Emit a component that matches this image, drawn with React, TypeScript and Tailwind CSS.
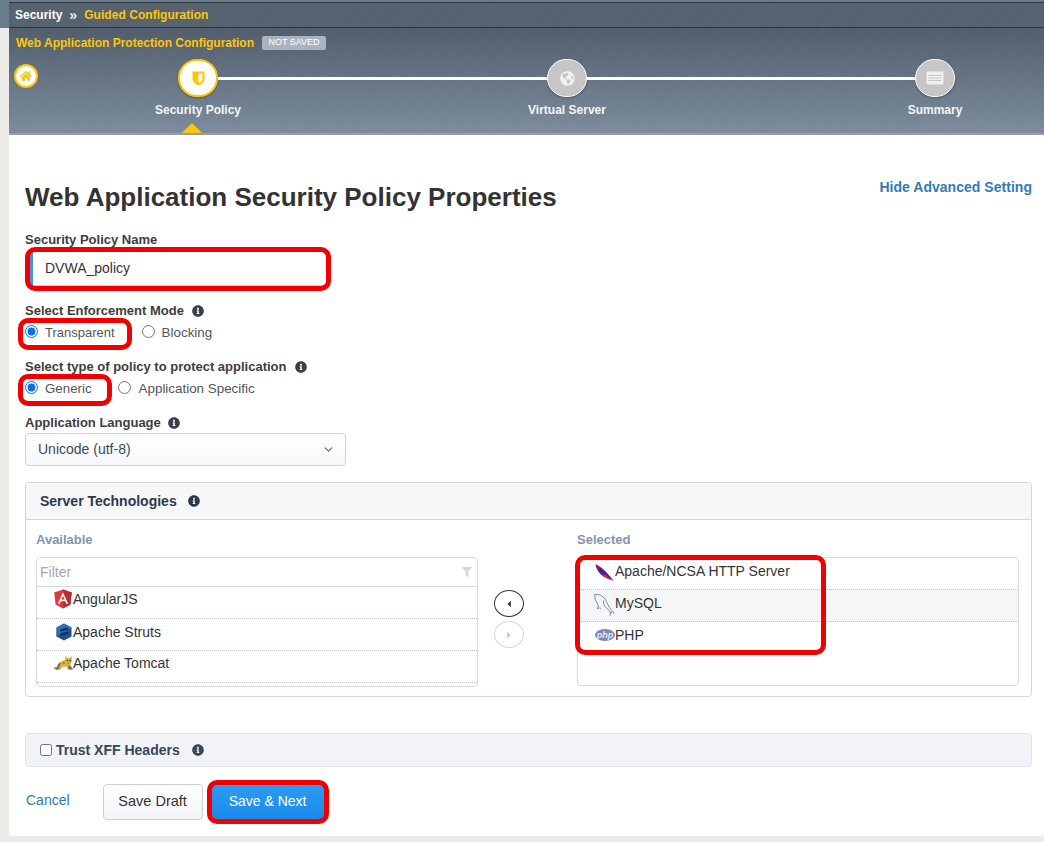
import { ChevronDown } from "lucide-react";
import { FaCaretLeft, FaCaretRight, FaFilter, FaGlobeAmericas, FaHome, FaInfoCircle } from "react-icons/fa";

const Info = () => <FaInfoCircle className="text-[12px] text-[#3a3f47]" />;

const AngularLogo = () => (
  <svg width="20" height="20" viewBox="0 0 20 20" className="shrink-0 -my-[1px]">
    <path d="M10 0.5 L18.8 3.6 L17.4 15.4 L10 19.5 L2.6 15.4 L1.2 3.6 Z" fill="#dd3a3a" />
    <path d="M10 0.5 L18.8 3.6 L17.4 15.4 L10 19.5 Z" fill="#b52e31" />
    <path d="M10 3.2 L15.2 14.8 H13.2 L12.2 12.2 H7.8 L6.8 14.8 H4.8 Z M10 7 L8.5 10.6 H11.5 Z" fill="#f2f2f2" fillRule="evenodd" />
  </svg>
);

const StrutsLogo = () => (
  <svg width="18" height="18" viewBox="0 0 18 18" className="shrink-0">
    <path d="M9 0.5 L16.5 4.6 V13.4 L9 17.5 L1.5 13.4 V4.6 Z" fill="#23508f" />
    <path d="M9 0.5 L16.5 4.6 L1.5 13.4 V4.6 Z" fill="#2f6fb8" />
    <path d="M5 6.5 L12.5 4.6 L13 6.4 L5.5 8.4 Z M5 10.8 L13 8.8 L13.4 10.6 L5.4 12.8 Z" fill="#10284f" />
  </svg>
);

const TomcatLogo = () => (
  <svg width="20" height="16" viewBox="0 0 20 16" className="shrink-0">
    <path d="M0.5 13 L4 12 L6 7.5 L10 5.5 L12 5 L12.5 1 L14.5 3 L16.5 3 L18.5 1 L19 6 L17.5 8.8 L17.5 11 L20 14.5 L15.5 14.5 L13.5 11.5 L9.5 12 L7 15 L3.5 14.8 Z" fill="#dcb53c" />
    <path d="M0.5 13 L4 12 L5.6 8.5 L8 8 L6.6 12 L5 14.6 L3.5 14.8 Z M15.5 14.5 L14.6 11.8 L17.3 10.6 L20 14.5 Z" fill="#77745c" />
    <path d="M8.5 7.5 L12.5 7 L11 9.5 Z" fill="#a8872a" />
    <circle cx="14.3" cy="5.6" r="0.8" fill="#3f3a22" />
    <circle cx="17" cy="5.6" r="0.8" fill="#3f3a22" />
    <path d="M15 7.8 H16.4 L15.7 8.8 Z" fill="#6b4a1e" />
  </svg>
);

const FeatherLogo = () => (
  <svg width="20" height="18" viewBox="0 0 20 18" className="shrink-0 mt-[4px]">
    <path d="M0.5 0.5 C4 1.5 9 5.5 12 9 C14 11.3 16 13.6 18.8 16.6 C14.5 15.4 9 13.4 5.6 10.2 C2.8 7.4 1 3.6 0.5 0.5 Z" fill="#4a1f8f" />
    <path d="M0.5 0.5 C2.5 1.2 4 2.4 5.4 3.8 L3 5.4 C1.8 3.8 1 2.2 0.5 0.5 Z" fill="#a3195b" />
    <path d="M9 10 C12 12 15 14.4 18.8 16.6 C15.4 15.8 11.4 14.4 8.2 12.2 Z" fill="#c92f6c" />
    <path d="M15.4 13.4 L19 17 L17.5 16.4 Z" fill="#e6a221" />
  </svg>
);

const DolphinLogo = () => (
  <svg width="21" height="23" viewBox="0 0 21 23" className="shrink-0 -my-[1px] mt-[2px]" fill="none" stroke="#5f8a99" strokeWidth="0.9" strokeLinecap="round" strokeLinejoin="round">
    <path d="M1 1.5 C5 1 8.5 2.5 11 6 C13 9 14.2 13.5 17.5 17 C18.5 18.2 19.6 19.2 20 20.5" />
    <path d="M1 1.5 C0.4 4.5 1.2 7.5 3.2 10 C4.4 11.8 4.2 14 3.6 15.5" />
    <path d="M3.6 15.5 C4.8 14.6 6 14.8 7 15.8 M9.4 8 C9.2 11 10.6 14 13.6 16 C15 17 16 18.4 16.4 20 M16.4 20 L18.2 18.8 M16.4 20 L16 22.4" />
  </svg>
);

const PhpLogo = () => (
  <span className="w-[20px] h-[12px] rounded-[50%] bg-[#7a86b8] shrink-0 flex items-center justify-center font-['Liberation_Sans',sans-serif] font-bold italic text-[9px] leading-none text-[#e6e9f5]">
    php
  </span>
);

const Row = ({ logo, name, shade, last, pl, pt = "pt-[2px]" }: { logo: React.ReactNode; name: string; shade?: boolean; last?: boolean; pl: string; pt?: string }) => (
  <div className={`h-[32px] flex items-start ${pt} ${pl} ${shade ? "bg-[#f5f6f8]" : ""} ${last ? "" : "border-b border-dotted border-[#b9bdc9]"}`}>
    <span className="flex items-center h-[20px] text-[14px] leading-[20px] text-[#333]">
      {logo}
      {name}
    </span>
  </div>
);

const Mark = ({ className }: { className: string }) => (
  <div className={`absolute border-[5px] border-[#f00000] rounded-[10px] pointer-events-none ${className}`} />
);

export default function App() {
  return (
    <div className="relative w-[1044px] h-[842px] overflow-hidden bg-[#ecebe7] font-['Liberation_Sans',Arial,sans-serif]">
      {/* page-top strip behind the title bar */}
      <div className="h-[28px] w-[1044px] bg-[#6b7b8e] -mb-[28px]" />
      <div className="relative ml-[9px] w-[1035px]">
        {/* breadcrumb */}
        <div className="pt-[2px]">
          <div className="h-[26px] flex items-center pl-[6px] border-t border-b border-[#2f353c] bg-[#55616e] bg-[repeating-linear-gradient(135deg,rgba(255,255,255,0.03)_0px,rgba(255,255,255,0.03)_1px,transparent_1px,transparent_3px)] text-[12px] font-bold leading-none">
            <span className="text-white">Security</span>
            <span className="text-[#e8e8e8] text-[14px] ml-[7px] mr-[7px]">»</span>
            <span className="text-[#fdc60b] tracking-[0.05px]">Guided Configuration</span>
          </div>
        </div>
        {/* wizard header */}
        <div className="relative h-[107px] bg-[repeating-linear-gradient(135deg,rgba(255,255,255,0.035)_0px,rgba(255,255,255,0.035)_1px,transparent_1px,transparent_3px),linear-gradient(#505c69,#7b8b9d)] border-b-[2px] border-[#9a9d9f]">
          <div className="flex items-center pl-[7px] pt-[7px] h-[23px]">
            <span className="text-[12px] font-bold text-[#fdc60b]">Web Application Protection Configuration</span>
            <span className="ml-[8px] h-[14px] w-[64px] rounded-[2px] bg-[#aab3c0] text-[9px] text-white flex items-center justify-center">NOT SAVED</span>
          </div>
          <div className="flex items-center pl-[5px] mt-[8px]">
            <span className="w-[24px] h-[24px] -mt-[5px] rounded-full bg-white border-[2px] border-[#fdc60b] flex items-center justify-center">
              <FaHome className="text-[12px] text-[#fdc60b]" />
            </span>
            <span className="ml-[140px] w-[40px] h-[38px] rounded-full bg-white border-[2px] border-[#fdc60b] flex items-center justify-center shadow-[0_1px_2px_rgba(0,0,0,0.3)]">
              <svg width="13" height="15" viewBox="0 0 13 15">
                <path d="M0.5 0.5 H12.5 V7.5 C12.5 11 9.5 13.3 6.5 14.5 C3.5 13.3 0.5 11 0.5 7.5 Z" fill="#fdc60b" />
                <path d="M6.5 2.5 H10.5 V7.5 C10.5 9.6 8.6 11 6.5 12 Z" fill="#ffffff" />
              </svg>
            </span>
            <span className="w-[329px] h-[3px] bg-white" />
            <span className="w-[40px] h-[38px] rounded-full bg-[#c6c6c6] border border-white flex items-center justify-center shadow-[0_1px_2px_rgba(0,0,0,0.3)]">
              <FaGlobeAmericas className="text-[15px] text-[#f2f2f2]" />
            </span>
            <span className="w-[328px] h-[3px] bg-white" />
            <span className="w-[40px] h-[38px] rounded-full bg-[#c6c6c6] border border-white flex items-center justify-center shadow-[0_1px_2px_rgba(0,0,0,0.3)]">
              <svg width="18" height="14" viewBox="0 0 18 14">
                <rect x="0.5" y="0.5" width="17" height="13" rx="1" fill="#f0f0f0" />
                <path d="M2.5 4.5 H15.5 M2.5 7 H15.5 M2.5 9.5 H15.5" stroke="#c6c6c6" strokeWidth="1" />
              </svg>
            </span>
          </div>
          <div className="flex mt-[4px] text-[12px] font-bold leading-[18px] text-[#f4f5f6]">
            <span className="ml-[129px] w-[120px] text-center">Security Policy</span>
            <span className="ml-[249px] w-[120px] text-center">Virtual Server</span>
            <span className="ml-[248px] w-[120px] text-center">Summary</span>
          </div>
          <div className="absolute left-[173px] bottom-0 w-0 h-0 border-l-[10px] border-r-[10px] border-b-[10px] border-l-transparent border-r-transparent border-b-[#fdc60b]" />
        </div>
        {/* content */}
        <div className="h-[701px] bg-white rounded-b-[4px] pl-[16px] pr-[12px]">
          <div className="flex justify-between">
            <h1 className="mt-[47px] text-[26px] leading-[30px] font-bold text-[#333]">Web Application Security Policy Properties</h1>
            <a className="mt-[44px] text-[14px] leading-[17px] font-bold text-[#337ab7] tracking-[0.03px]">Hide Advanced Setting</a>
          </div>
          <label className="block mt-[20px] text-[13px] leading-[16px] font-bold text-[#3d3d3d]">Security Policy Name</label>
          <div className="mt-[2px] ml-[4px] w-[298px] h-[36px] flex items-center rounded-[3px] border border-[#ccd] border-l-[4px] border-l-[#4a90e2] pl-[12px] text-[14px] text-[#333]">DVWA_policy</div>

          <div className="mt-[17px] flex items-center gap-[8px] text-[13px] leading-[16px] font-bold text-[#3d3d3d]">Select Enforcement Mode <Info /></div>
          <div className="mt-[4px] flex items-center h-[20px] text-[13px] text-[#555]">
            <input type="radio" defaultChecked name="mode" className="w-[13px] h-[13px] m-0 -mt-[3px] accent-[#0b6ff0]" />
            <span className="ml-[7px]">Transparent</span>
            <input type="radio" name="mode" className="w-[13px] h-[13px] m-0 -mt-[3px] ml-[27px] accent-[#0b6ff0]" />
            <span className="ml-[7px] text-[13.4px]">Blocking</span>
          </div>

          <div className="mt-[16px] flex items-center gap-[8px] text-[13px] leading-[16px] font-bold text-[#3d3d3d]">Select type of policy to protect application <Info /></div>
          <div className="mt-[4px] flex items-center h-[20px] text-[13px] text-[#555]">
            <input type="radio" defaultChecked name="type" className="w-[13px] h-[13px] m-0 -mt-[3px] accent-[#0b6ff0]" />
            <span className="ml-[7px] text-[13.3px]">Generic</span>
            <input type="radio" name="type" className="w-[13px] h-[13px] m-0 -mt-[3px] ml-[26px] accent-[#0b6ff0]" />
            <span className="ml-[8px] text-[13.4px]">Application Specific</span>
          </div>

          <div className="mt-[16px] flex items-center gap-[7px] text-[13px] leading-[16px] font-bold text-[#3d3d3d]">Application Language <Info /></div>
          <div className="mt-[2px] w-[321px] h-[33px] flex items-center justify-between pl-[12px] pr-[10px] rounded-[4px] border border-[#ced2da] bg-[linear-gradient(#ffffff,#f6f7f9)] text-[14px] text-[#3b4a5f]">
            Unicode (utf-8)
            <ChevronDown size={13} className="text-[#666]" />
          </div>

          {/* server technologies */}
          <div className="mt-[16px] h-[215px] rounded-[4px] border border-[#d3d6e0]">
            <div className="h-[37px] flex items-center gap-[11px] pl-[14px] bg-[#f6f7f9] border-b border-[#d3d6e0] rounded-t-[4px] text-[14px] font-bold text-[#2d3a4d]">
              Server Technologies <FaInfoCircle className="text-[12px] text-[#2d3a4d]" />
            </div>
            <div className="flex pl-[10px] pr-[12px]">
              <div className="w-[442px]">
                <div className="mt-[12px] text-[13px] leading-[16px] font-bold text-[#8494ab]">Available</div>
                <div className="mt-[9px] h-[130px] rounded-[4px] border border-[#d8dae2]">
                  <div className="h-[29px] flex items-center justify-between pl-[3px] pr-[5px] border-b border-[#d8dae2] text-[14px] text-[#a3a6ad]">
                    Filter
                    <FaFilter className="text-[10px] text-[#d5d7db]" />
                  </div>
                  <Row pl="pl-[16px]" logo={<AngularLogo />} name="AngularJS" />
                  <Row pl="pl-[18px]" pt="pt-[3px]" logo={<StrutsLogo />} name="Apache Struts" />
                  <Row pl="pl-[16px]" logo={<TomcatLogo />} name="Apache Tomcat" />
                </div>
              </div>
              <div className="w-[99px] flex flex-col items-start pt-[70px] gap-[4px] pl-[16px]">
                <span className="shrink-0 w-[30px] h-[27px] rounded-[50%] border border-[#333] flex items-center justify-center text-[10px] text-[#333]"><FaCaretLeft /></span>
                <span className="shrink-0 w-[30px] h-[27px] rounded-[50%] border border-[#d5d7db] flex items-center justify-center text-[10px] text-[#c4c6cb]"><FaCaretRight /></span>
              </div>
              <div className="w-[442px]">
                <div className="mt-[12px] text-[13px] leading-[16px] font-bold text-[#8494ab]">Selected</div>
                <div className="mt-[9px] h-[129px] rounded-[4px] border border-[#d8dae2]">
                  <Row pl="pl-[17px]" pt="pt-[3px]" logo={<FeatherLogo />} name="Apache/NCSA HTTP Server" />
                  <Row pl="pl-[16px]" pt="pt-[3px]" logo={<DolphinLogo />} name="MySQL" shade />
                  <Row pl="pl-[17px]" pt="pt-[3px]" logo={<PhpLogo />} name="PHP" last />
                </div>
              </div>
            </div>
          </div>

          {/* trust xff */}
          <div className="mt-[36px] h-[34px] flex items-center pl-[14px] rounded-[4px] border border-[#e2e4ec] bg-[#f2f3f7] text-[14px] font-bold text-[#3a4555]">
            <input type="checkbox" className="w-[12px] h-[12px] m-0 mr-[4px]" />
            Trust XFF Headers
            <FaInfoCircle className="ml-[12px] text-[12px] text-[#3a4555]" />
          </div>

          {/* actions */}
          <div className="mt-[17px] flex items-center text-[14px]">
            <a className="ml-[1px] -mt-[4px] text-[#337ab7]">Cancel</a>
            <span className="ml-[33px] w-[100px] h-[36px] rounded-[4px] border border-[#ccd0da] bg-[linear-gradient(#ffffff,#f2f3f6)] flex items-center justify-center text-[14.5px] text-[#333]">Save Draft</span>
            <span className="ml-[9px] -mt-[1px] w-[112px] h-[35px] rounded-[4px] bg-[linear-gradient(#2e9cf3,#1a8ae8)] flex items-center justify-center text-white">Save &amp; Next</span>
          </div>
        </div>
      </div>

      {/* annotations drawn over the page */}
      <Mark className="left-[25px] top-[247px] w-[306px] h-[44px]" />
      <Mark className="left-[18px] top-[318px] w-[114px] h-[32px]" />
      <Mark className="left-[18px] top-[374px] w-[94px] h-[32px]" />
      <Mark className="left-[575px] top-[555px] w-[251px] h-[100px]" />
      <Mark className="left-[207px] top-[780px] w-[122px] h-[44px]" />
    </div>
  );
}
